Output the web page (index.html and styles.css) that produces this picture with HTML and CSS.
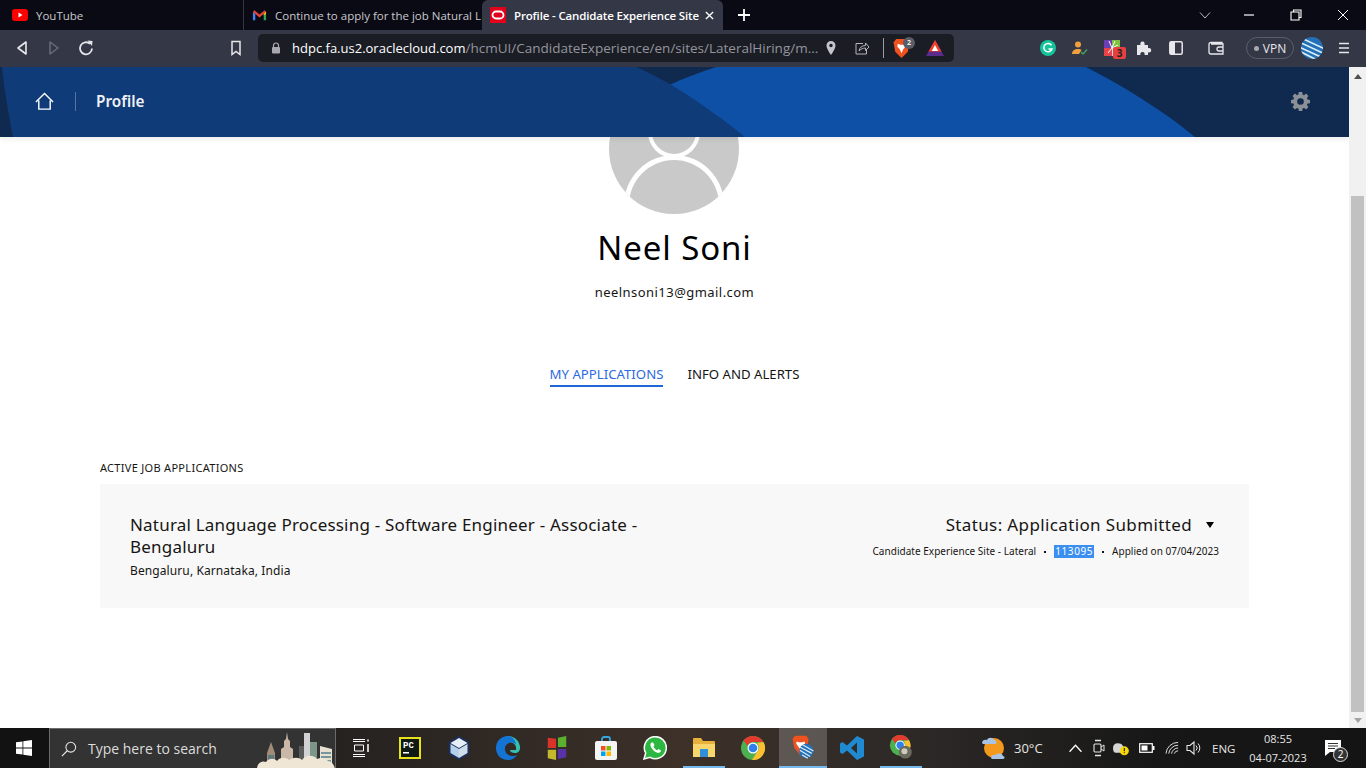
FILE: index.html
```html
<!DOCTYPE html>
<html lang="en">
  <head>
    <meta charset="UTF-8" />
    <title>Profile - Candidate Experience Site</title>
    <link rel="stylesheet" href="styles.css">
  </head>
  <body>
    <div class="tabbar">
      <div class="tab tab-yt">
        <svg class="fav" viewBox="0 0 16 16"><rect y="2" width="16" height="12" rx="3" fill="#f00"/><path d="M6.500 5.500v5l4-2.500z" fill="#fff"/></svg>
        <span class="tab-title">YouTube</span>
      </div>
      <div class="tab tab-gm">
        <svg class="fav" viewBox="0 0 16 16"><path d="M1 13V4l2.500 2v7z" fill="#4285f4"/><path d="M15 13V4l-2.500 2v7z" fill="#34a853"/><path d="M1 4l1.500-1.500L8 7l5.500-4.500L15 4 8 10z" fill="#ea4335"/><path d="M12.500 6L15 4v2l-2.500 2z" fill="#fbbc04"/></svg>
        <span class="tab-title">Continue to apply for the job Natural L</span>
      </div>
      <div class="tab tab-active">
        <svg class="fav" viewBox="0 0 16 16"><rect width="16" height="16" fill="#e2001a"/><rect x="2.500" y="4.500" width="11" height="7" rx="3.500" fill="none" stroke="#fff" stroke-width="1.800"/></svg>
        <span class="tab-title">Profile - Candidate Experience Site</span>
        <svg class="tab-x" viewBox="0 0 10 10"><path d="M1 1l8 8M9 1l-8 8" stroke="#fff" stroke-width="1.500"/></svg>
      </div>
      <svg class="tab-plus" viewBox="0 0 12 12"><path d="M6 0v12M0 6h12" stroke="#fff" stroke-width="1.800"/></svg>
      <div class="win-controls">
        <svg class="win-btn win-chev" viewBox="0 0 12 12"><path d="M1 3.500l5 5.500 5-5.500" fill="none" stroke="#b8b8be" stroke-width="1"/></svg>
        <svg class="win-btn" viewBox="0 0 12 12"><path d="M1 6h10" stroke="#fff" stroke-width="1.200"/></svg>
        <svg class="win-btn" viewBox="0 0 12 12"><path d="M3.500 2.500V1h7.500v7.500H9M1 3h8v8H1z" fill="none" stroke="#fff" stroke-width="1.100"/></svg>
        <svg class="win-btn" viewBox="0 0 12 12"><path d="M1 1l10 10M11 1L1 11" stroke="#fff" stroke-width="1"/></svg>
      </div>
    </div>

    <div class="toolbar">
      <div class="nav-btns">
        <svg class="nav-ico" viewBox="0 0 14 16"><path d="M11 2v12L3 8z" fill="none" stroke="#e8e8ec" stroke-width="1.600" stroke-linejoin="round"/></svg>
        <svg class="nav-ico" viewBox="0 0 14 16"><path d="M3 2v12l8-6z" fill="none" stroke="#6a6d78" stroke-width="1.500" stroke-linejoin="round"/></svg>
        <svg class="nav-ico nav-reload" viewBox="0 0 16 16"><path d="M14 8.500a6 6 0 1 1-2-4.700" fill="none" stroke="#e8e8ec" stroke-width="1.800"/><path d="M9.500 .5l5 .5-.5 5z" fill="#e8e8ec"/></svg>
      </div>
      <svg class="bookmark" viewBox="0 0 12 16"><path d="M2 1.500h8v13l-4-3-4 3z" fill="none" stroke="#e8e8ec" stroke-width="1.500"/></svg>
      <div class="urlbar">
        <svg class="lock" viewBox="0 0 10 12"><path d="M2.500 5V3.500a2.500 2.500 0 0 1 5 0V5" fill="none" stroke="#a8a8b0" stroke-width="1.200"/><rect x="1" y="5" width="8" height="6.500" rx="1" fill="#a8a8b0"/></svg>
        <span class="url"><b>hdpc.fa.us2.oraclecloud.com</b>/hcmUI/CandidateExperience/en/sites/LateralHiring/m...</span>
        <svg class="pin" viewBox="0 0 12 16"><path d="M6 1a4.500 4.500 0 0 0-4.500 4.500C1.500 9 6 15 6 15s4.500-6 4.500-9.500A4.500 4.500 0 0 0 6 1z" fill="#c4c4ca"/><circle cx="6" cy="5.500" r="1.700" fill="#1b1d25"/></svg>
        <svg class="share" viewBox="0 0 16 16"><path d="M9 3.500H2v10.500h10.500V10" fill="none" stroke="#b4b4bc" stroke-width="1"/><path d="M5 11c.5-3.500 3-5.500 6.500-5.500V3l3.500 4-3.500 3.500V8C9 8 7 9 5 11z" fill="none" stroke="#b4b4bc" stroke-width="1"/></svg>
        <span class="url-divider"></span>
        <div class="brave-shield">
          <svg class="brave-ico" viewBox="0 0 16 18"><path d="M3 0h10l2.500 3-1.500 9-6 6-6-6L.5 3z" fill="#f0521f"/><path d="M4.500 4.500l2.500 1h2l2.500-1 .5 2.500-2.500 3-1.500 3.500-1.500-3.500L4 7z" fill="#fff"/></svg>
          <span class="shield-count">2</span>
        </div>
        <svg class="bat-ico" viewBox="0 0 18 16"><path d="M9 0l9 16H0z" fill="#5a2a8c"/><path d="M9 0l6.500 11.500h-13z" fill="#f1412a"/><path d="M9 5l3.200 6H5.800z" fill="#fff"/></svg>
      </div>
      <div class="ext-icons">
        <svg class="ext-g" viewBox="0 0 16 16"><circle cx="8" cy="8" r="8" fill="#15c39a"/><path d="M11.500 5.200A4.200 4.200 0 1 0 12 9H8.500" fill="none" stroke="#fff" stroke-width="1.500"/></svg>
        <svg class="ext-p" viewBox="0 0 18 16"><circle cx="7" cy="4.500" r="3" fill="#f2a03d"/><path d="M1 14c0-3.500 2.500-5 6-5 2 0 3 .5 3.500 1L8 14z" fill="#f2a03d"/><path d="M10 12l2 2 4-4.500" fill="none" stroke="#3fa45b" stroke-width="1.400"/></svg>
        <div class="ext-color">
          <svg class="ext-color-ico" viewBox="0 0 16 16"><rect width="8" height="8" fill="#6a3fb5"/><rect x="8" width="8" height="8" fill="#7fbf3f"/><rect y="8" width="8" height="8" fill="#e8424a"/><rect x="8" y="8" width="8" height="8" fill="#d8d8dc"/><path d="M8 8L5 1M8 8l3-7M8 8l6-3M8 8l-4 5" stroke="#fff" stroke-width="1"/></svg>
          <span class="ext-badge">3</span>
        </div>
        <svg class="ext-puzzle" viewBox="0 0 16 16"><path d="M1 5h3.500C4 3.500 4.500 1.500 6.500 1.500S9 3.500 8.500 5H12v3.200c1.500-.5 3.200 0 3.200 2s-1.700 2.500-3.200 2V15H8.500c.5-1.500 0-3-2-3s-2.500 1.500-2 3H1z" fill="#e8e8ec"/></svg>
        <svg class="ext-side" viewBox="0 0 14 14"><rect x=".8" y=".8" width="12.400" height="12.400" rx="1.500" fill="none" stroke="#e8e8ec" stroke-width="1.500"/><rect x="1" y="1" width="5" height="12" fill="#e8e8ec"/></svg>
        <svg class="ext-wallet" viewBox="0 0 16 14"><path d="M14 3V1.500H3A1.800 1.800 0 0 0 1 3.500V11a2 2 0 0 0 2 2h12V3H3" fill="none" stroke="#e8e8ec" stroke-width="1.300"/><path d="M15 6h-4a2 2 0 0 0 0 4h4" fill="none" stroke="#e8e8ec" stroke-width="1.300"/></svg>
        <div class="vpn"><i></i>VPN</div>
        <svg class="ext-globe" viewBox="0 0 22 22"><defs><clipPath id="globe"><circle cx="11" cy="11" r="11"/></clipPath></defs><g clip-path="url(#globe)"><rect width="22" height="22" fill="#2470b8"/><path d="M-2 0L24 12M-4 4L24 17M-4 9L22 21M-2 14L16 23" stroke="#d8eef6" stroke-width="1.700"/></g></svg>
        <svg class="ext-menu" viewBox="0 0 12 12"><path d="M1 1.500h10M1 6h10M1 10.500h10" stroke="#e8e8ec" stroke-width="1.700"/></svg>
      </div>
    </div>

    <div class="viewport">
      <div class="page">
        <header class="hero">
          <svg class="hero-bg" viewBox="0 0 1349 70" preserveAspectRatio="none">
            <rect width="1349" height="70" fill="#10294f"/>
            <path d="M620 45C650 25 685 10 716 0H1086C1125 20 1165 45 1195 70H620z" fill="#0d50a5"/>
            <path d="M2 0H636C670 14 710 42 745 70H13C8 45 4 20 2 0z" fill="#0f3b78"/>
          </svg>
          <div class="hero-left">
            <svg class="home" viewBox="0 0 20 20"><path d="M1 10.500L10 1.500l9 9M4 9v9h12V9" fill="none" stroke="#fff" stroke-width="1.500"/></svg>
            <span class="hero-sep"></span>
            <span class="hero-title">Profile</span>
          </div>
          <svg class="gear" viewBox="0 0 20 20"><path fill-rule="evenodd" d="M8.200 0h3.600l.4 2.700 1.500.6 2.200-1.600 2.500 2.500-1.600 2.200.6 1.500 2.600.4v3.500l-2.600.4-.6 1.500 1.600 2.200-2.500 2.500-2.200-1.600-1.500.6-.4 2.600H8.200l-.4-2.600-1.500-.6-2.200 1.600-2.500-2.500 1.600-2.200-.6-1.500L0 11.800V8.300l2.600-.4.600-1.500-1.600-2.200 2.500-2.500 2.200 1.600 1.500-.6zM10 6.500a3.500 3.500 0 1 0 0 7 3.500 3.500 0 0 0 0-7z" fill="#8b8f96"/></svg>
        </header>

        <section class="profile">
          <svg class="avatar" viewBox="0 53 130 77">
            <defs><clipPath id="avatar-clip"><circle cx="65" cy="65" r="65"/></clipPath></defs>
            <g clip-path="url(#avatar-clip)">
              <rect width="130" height="130" fill="#c9c9c9"/>
              <circle cx="65" cy="48" r="26" fill="#fff"/>
              <circle cx="65" cy="48" r="22" fill="#c9c9c9"/>
              <circle cx="65" cy="121" r="50" fill="#fff"/>
              <circle cx="65" cy="121" r="45" fill="#c9c9c9"/>
            </g>
          </svg>
          <h1 class="name">Neel Soni</h1>
          <div class="email">neelnsoni13@gmail.com</div>
          <nav class="tabs">
            <a class="tabs-item tabs-active">MY APPLICATIONS</a>
            <a class="tabs-item">INFO AND ALERTS</a>
          </nav>
        </section>

        <section class="apps">
          <h2 class="apps-heading">ACTIVE JOB APPLICATIONS</h2>
          <div class="card">
            <div class="card-left">
              <div class="job-title">Natural Language Processing - Software Engineer - Associate - Bengaluru</div>
              <div class="job-loc">Bengaluru, Karnataka, India</div>
            </div>
            <div class="card-right">
              <div class="status">Status: Application Submitted<i class="caret"></i></div>
              <div class="meta">
                <span>Candidate Experience Site - Lateral</span>
                <span class="dot"></span>
                <span class="req">113095</span>
                <span class="dot"></span>
                <span>Applied on 07/04/2023</span>
              </div>
            </div>
          </div>
        </section>
      </div>
      <div class="scrollbar">
        <i class="arrow arrow-up"></i>
        <div class="scroll-track"><div class="scroll-thumb"></div></div>
        <i class="arrow arrow-down"></i>
      </div>
    </div>

    <div class="taskbar">
      <div class="start">
        <svg class="start-ico" viewBox="0 0 16 16"><path d="M0 2.300l6.500-.9v6.200H0zM7.300 1.300L16 0v7.600H7.300zM0 8.400h6.500v6.200L0 13.700zM7.300 8.400H16V16l-8.700-1.300z" fill="#fff"/></svg>
      </div>
      <div class="search">
        <svg class="search-ico" viewBox="0 0 18 18"><circle cx="11" cy="7" r="5.500" fill="none" stroke="#e6e6e6" stroke-width="1.200"/><path d="M7 11l-6 6" stroke="#e6e6e6" stroke-width="1.300"/></svg>
        <span class="search-text">Type here to search</span>
        <svg class="city" viewBox="0 0 79 40">
          <path d="M11 40V24l4-11 4 11v16z" fill="#a08c78"/>
          <path d="M12 26h6v14h-6z" fill="#5c7a7c"/>
          <path d="M25 40V20l3-2v-6l2-2 1-7 1 7 2 2v6l3 2v20z" fill="#c9b8a8"/>
          <path d="M43 17h8v23h-8z" fill="#5a5a58"/>
          <path d="M48 4h6v36h-6z" fill="#d2d2d4"/>
          <path d="M54 13h7v27h-7z" fill="#7c9688"/>
          <path d="M64 17l12 3v20H64z" fill="#e8e0d0"/>
          <path d="M65 24h10M65 28h10M65 32h10" stroke="#4f7d8c" stroke-width="1.500"/>
          <path d="M1 40c0-5 4-9 9-7 3-4 8-4 11-1 3-4 9-4 12-1 4-3 10-3 13 0 3-5 11-6 15-1 4-2 9-1 11 2 3 0 6 3 7 8z" fill="#efe6d6"/>
        </svg>
      </div>
      <div class="task-apps">
        <div class="task-app">
          <svg class="ico-taskview" viewBox="0 0 16 18"><path d="M0 .5h12M0 2.500h12M1.500 6h9v6h-9zM0 15.500h12M0 17.500h12" fill="none" stroke="#fff" stroke-width="1"/><path d="M15 .5v2M15 5v8" stroke="#fff" stroke-width="1.500"/></svg>
        </div>
        <div class="task-app">
          <svg class="ico-pc" viewBox="0 0 22 22"><rect width="22" height="22" fill="#e8e21d"/><rect x="2" y="2" width="18" height="18" fill="#0f1a14"/><text x="4" y="11" class="pc-text">PC</text><rect x="4" y="15" width="6" height="1.500" fill="#fff"/></svg>
        </div>
        <div class="task-app">
          <svg viewBox="0 0 22 24"><path d="M11 0l10.500 6v12L11 24 .5 18V6z" fill="#1c2f5a"/><path d="M11 2l8.500 5L11 12 2.500 7z" fill="#e6eff8"/><path d="M2.500 8L11 13v9l-8.500-5z" fill="#b4d0ec"/><path d="M19.500 8L11 13v9l8.500-5z" fill="#d0deec"/></svg>
        </div>
        <div class="task-app">
          <svg viewBox="0 0 24 24"><path d="M12 0a12 12 0 0 1 12 12c0 3-2 5-5 5-3 0-5-1-5-3h6c1-4-2-8-7-8-4 0-7 2-8 5C6 3 9 0 12 0z" fill="#35c1b0"/><path d="M12 0C5 0 0 5 0 12c0 7 5 12 12 12 4 0 7-2 9-5-4 2-11 1-12-5-.5-3 1-6 4-7 3-1 6 0 7 2 0-5-4-9-8-9z" fill="#1474d4"/></svg>
        </div>
        <div class="task-app">
          <svg viewBox="0 0 22 26"><path d="M1 2l9 1v10H1z" fill="#d8342a"/><path d="M12 2l9-2v12h-9z" fill="#5cb030"/><path d="M1 15h9v11l-9-2z" fill="#c4b92c"/><path d="M12 14h9v9l-9 2z" fill="#5a32a8"/></svg>
        </div>
        <div class="task-app">
          <svg viewBox="0 0 22 24"><path d="M7 6V3a2 2 0 0 1 2-2h4a2 2 0 0 1 2 2v3" fill="none" stroke="#35a8e0" stroke-width="1.800"/><rect y="5" width="22" height="19" rx="2" fill="#f4f4f4"/><rect x="6" y="10" width="4.500" height="4.500" fill="#f25022"/><rect x="11.500" y="10" width="4.500" height="4.500" fill="#7fba00"/><rect x="6" y="15.500" width="4.500" height="4.500" fill="#00a4ef"/><rect x="11.500" y="15.500" width="4.500" height="4.500" fill="#ffb900"/></svg>
        </div>
        <div class="task-app">
          <svg viewBox="0 0 24 24"><path d="M1 23l1.700-6A11 11 0 1 1 7 21.300z" fill="#2bb741" stroke="#fff" stroke-width="1.500"/><path d="M8.500 6.500c-1.500 1-1.500 3 0 5.500s4 4.500 6.500 5c1.500 0 3-1 3-2.500l-2.500-1.500-1.300 1.200c-1.500-.5-3-2-3.700-3.700l1-1.300-1.300-2.700z" fill="#fff"/></svg>
        </div>
        <div class="task-app task-open">
          <svg viewBox="0 0 24 22"><path d="M1 3a1 1 0 0 1 1-1h7l2 3h11a1 1 0 0 1 1 1v14a1 1 0 0 1-1 1H2a1 1 0 0 1-1-1z" fill="#e8b23a"/><rect x="1" y="8" width="22" height="13" fill="#f9d66c"/><rect x="8" y="13" width="8" height="8" fill="#2f8fd8"/></svg>
        </div>
        <div class="task-app">
          <svg viewBox="0 0 24 24"><circle cx="12" cy="12" r="12" fill="#4caf50"/><path d="M12 0a12 12 0 0 1 10.400 6H12a6 6 0 0 0-5.600 3.800L2.500 4.500A12 12 0 0 1 12 0z" fill="#e33b2e"/><path d="M22.400 6A12 12 0 0 1 11 24l5.300-8.500A6 6 0 0 0 16 7z" fill="#fbc02d"/><circle cx="12" cy="12" r="5.500" fill="#fff"/><circle cx="12" cy="12" r="4.300" fill="#2f80ed"/></svg>
        </div>
        <div class="task-app task-active">
          <svg viewBox="0 0 26 30"><path d="M3 1h14l3 4-1.500 11L10 26l-8-10L0 5z" fill="#f0521f"/><path d="M5 8l3 1h4l3-1 .5 3-3 4-2.500 4-2.500-4-3-4z" fill="#fff"/><circle cx="17" cy="20" r="9" fill="#2470b8"/><path d="M9 15L24 23M9 19L22 27M12 25L19 29M12 12L26 20" stroke="#d8eef6" stroke-width="1.500"/></svg>
        </div>
        <div class="task-app">
          <svg viewBox="0 0 24 24"><path d="M17 0l7 3.500v17L17 24 7 14.500 2.500 18 0 16.500V7.500L2.500 6 7 9.500zM17 6.500L11 12l6 5.500z" fill="#1f8ad2" fill-rule="evenodd"/></svg>
        </div>
        <div class="task-app task-open">
          <svg viewBox="0 0 26 28"><circle cx="12" cy="12" r="12" fill="#4caf50"/><path d="M12 0a12 12 0 0 1 10.400 6H12a6 6 0 0 0-5.600 3.800L2.500 4.500A12 12 0 0 1 12 0z" fill="#e33b2e"/><path d="M22.400 6A12 12 0 0 1 11 24l5.300-8.500A6 6 0 0 0 16 7z" fill="#fbc02d"/><circle cx="12" cy="12" r="5.500" fill="#fff"/><circle cx="12" cy="12" r="4.300" fill="#2f80ed"/><circle cx="18" cy="20" r="7.500" fill="#6b6a5e"/><circle cx="17" cy="19" r="3.500" fill="#cfcabb"/></svg>
        </div>
      </div>
      <div class="tray">
        <svg class="weather" viewBox="0 0 24 26"><circle cx="13" cy="13" r="10" fill="#f39a1e"/><path d="M1 8c0-3 3-4 5-3 1-3 6-3 7 0 2 0 3 2 2 4H2z" fill="#a8c4e4"/><path d="M10 23c0-3 3-4 5-3 1-2 6-2 7 1 2 0 2 3 0 3H11z" fill="#a8c4e4"/></svg>
        <span class="temp">30°C</span>
        <svg class="tray-chev" viewBox="0 0 12 8"><path d="M.5 7L6 1l5.500 6" fill="none" stroke="#fff" stroke-width="1.200"/></svg>
        <svg class="tray-meet" viewBox="0 0 12 20"><path d="M2 2.500h6M2 17.500h6" stroke="#e6e6e6" stroke-width="1.500" fill="none"/><rect x="1" y="6" width="7" height="8" rx="1" fill="none" stroke="#e6e6e6" stroke-width="1.100"/><path d="M8 9l3-2v6l-3-2" fill="none" stroke="#e6e6e6"/></svg>
        <svg class="tray-cloud" viewBox="0 0 18 16"><path d="M0 8c0-3 2-5 5-5s5 1 6 4l-2 6H3c-2 0-3-2-3-5z" fill="#d6d6d6"/><circle cx="12" cy="11" r="4.800" fill="#f7d70a"/><path d="M12 8v3.500M12 12.500v1" stroke="#222" stroke-width="1.200"/></svg>
        <svg class="tray-batt" viewBox="0 0 16 12"><rect x=".7" y="1.700" width="12.600" height="8.600" fill="none" stroke="#fff" stroke-width="1.200"/><rect x="2.500" y="3.500" width="6" height="5" fill="#fff"/><rect x="14" y="4" width="1.500" height="4" fill="#fff"/></svg>
        <svg class="tray-wifi" viewBox="0 0 16 14"><path d="M1 13A13 13 0 0 1 14 1M4 13A10 10 0 0 1 14 4M7 13a7 7 0 0 1 7-6M10 13a4 4 0 0 1 4-3" fill="none" stroke="#e6e6e6" stroke-width="1"/></svg>
        <svg class="tray-vol" viewBox="0 0 16 16"><path d="M1 5.500h3L8 2v12l-4-3.500H1z" fill="none" stroke="#e6e6e6" stroke-width="1.100"/><path d="M10 5.500a3.500 3.500 0 0 1 0 5M12 3.500a6.500 6.500 0 0 1 0 9" fill="none" stroke="#e6e6e6"/></svg>
        <span class="lang">ENG</span>
        <div class="clock"><span>08:55</span><span>04-07-2023</span></div>
        <div class="notif">
          <svg class="notif-ico" viewBox="0 0 16 16"><path d="M0 0h16v12H5l-5 4z" fill="#fff"/><path d="M3 3.500h10M3 6h10M3 8.500h7" stroke="#333" stroke-width="1"/></svg>
          <span class="notif-count">2</span>
        </div>
      </div>
    </div>
  </body>
</html>
```

FILE: styles.css
```css
html,
body {
  margin: 0;
  height: 768px;
  overflow: hidden;
}
body {
  display: flex;
  flex-direction: column;
  width: 1366px;
  font-family: "Noto Sans", sans-serif;
  background: #fff;
}
svg {
  display: block;
  flex: none;
}

/* browser tabs */
.tabbar {
  display: flex;
  align-items: center;
  height: 30px;
  background: #0a0a14;
  font-family: "Open Sans", sans-serif;
  font-size: 11.500px;
  color: #c8c8cc;
}
.tab {
  display: flex;
  align-items: center;
  height: 30px;
  box-sizing: border-box;
  overflow: hidden;
  white-space: nowrap;
}
.tab-yt {
  width: 244px;
  padding-left: 12px;
  border-right: 1px solid #34353f;
}
.tab-gm {
  width: 238px;
  padding-left: 8px;
}
.fav {
  width: 16px;
  height: 16px;
  margin-right: 8px;
}
.tab-gm .fav {
  width: 15px;
  height: 15px;
}
.tab-title {
  overflow: hidden;
  flex: 1;
}
.tab-active {
  width: 241px;
  padding: 0 8px;
  background: #343745;
  border-radius: 6px 6px 0 0;
  color: #fff;
  font-weight: 600;
  letter-spacing: -0.15px;
}
.tab-x {
  width: 9px;
  height: 9px;
  margin-left: 6px;
  margin-right: 1px;
}
.tab-plus {
  width: 12px;
  height: 12px;
  margin-left: 15px;
}
.win-controls {
  display: flex;
  margin-left: auto;
  margin-right: 17px;
  gap: 35px;
}
.win-btn {
  width: 12px;
  height: 12px;
}
.win-chev {
  margin-right: -3px;
}

/* toolbar */
.toolbar {
  display: flex;
  align-items: center;
  height: 37px;
  box-sizing: border-box;
  padding: 4px 0 5px;
  background: #343745;
}
.nav-btns {
  display: flex;
  align-items: center;
  gap: 18px;
  width: 230px;
  padding-left: 15px;
  box-sizing: border-box;
}
.nav-ico {
  width: 14px;
  height: 16px;
}
.nav-reload {
  width: 16px;
  height: 16px;
  margin-left: -1px;
}
.bookmark {
  width: 12px;
  height: 16px;
  margin-right: 16px;
}
.urlbar {
  display: flex;
  align-items: center;
  width: 696px;
  height: 28px;
  box-sizing: border-box;
  padding-left: 13px;
  background: #1b1d25;
  border-radius: 5px;
}
.lock {
  width: 10px;
  height: 12px;
  margin-right: 11px;
}
.url {
  width: 533px;
  font-family: "Open Sans", sans-serif;
  font-size: 13.500px;
  color: #93959e;
  white-space: nowrap;
}
.url b {
  font-size: 13px;
  font-weight: 500;
  color: #fff;
}
.pin {
  width: 12px;
  height: 16px;
  margin-right: 17px;
}
.share {
  width: 16px;
  height: 16px;
}
.url-divider {
  width: 1px;
  height: 20px;
  margin: 0 9px 0 13px;
  background: #9a9ca4;
}
.brave-shield {
  position: relative;
  width: 16px;
  margin-right: 17px;
}
.brave-ico {
  width: 17px;
  height: 19px;
}
.shield-count {
  position: absolute;
  top: -2px;
  left: 10px;
  width: 12px;
  height: 12px;
  border-radius: 50%;
  background: #5a5c66;
  color: #eee;
  font-size: 7px;
  font-weight: 700;
  line-height: 12px;
  text-align: center;
}
.bat-ico {
  width: 18px;
  height: 16px;
}
.ext-icons {
  display: flex;
  align-items: center;
  margin-left: 86px;
}
.ext-g {
  width: 16px;
  height: 16px;
  margin-right: 15px;
}
.ext-p {
  width: 18px;
  height: 16px;
  margin-right: 15px;
}
.ext-color {
  position: relative;
  width: 16px;
  margin-right: 16px;
}
.ext-color-ico {
  width: 16px;
  height: 16px;
}
.ext-badge {
  position: absolute;
  top: 7px;
  left: 9px;
  width: 13px;
  height: 12px;
  border-radius: 2px;
  background: #e8403f;
  color: #222;
  font-size: 10px;
  font-weight: 700;
  line-height: 12px;
  text-align: center;
}
.ext-puzzle {
  width: 16px;
  height: 16px;
  margin-right: 17px;
}
.ext-side {
  width: 14px;
  height: 14px;
  margin-right: 25px;
}
.ext-wallet {
  width: 16px;
  height: 14px;
  margin-right: 22px;
}
.vpn {
  display: flex;
  align-items: center;
  justify-content: center;
  gap: 4px;
  width: 48px;
  height: 22px;
  box-sizing: border-box;
  border: 1px solid #5a5d6b;
  border-radius: 11px;
  font-family: "Open Sans", sans-serif;
  font-size: 12px;
  color: #e8e8ec;
}
.vpn i {
  width: 5px;
  height: 5px;
  border-radius: 50%;
  background: #a8a8b0;
}
.ext-globe {
  width: 22px;
  height: 22px;
  margin-left: 7px;
  margin-right: 15px;
}
.ext-menu {
  width: 12px;
  height: 12px;
}

/* page */
.viewport {
  display: flex;
  height: 661px;
}
.page {
  width: 1349px;
  overflow: hidden;
}
.hero {
  position: relative;
  z-index: 1;
  display: flex;
  align-items: center;
  justify-content: space-between;
  height: 70px;
  box-sizing: border-box;
  padding: 0 39px 2px 35px;
  box-shadow: 0 2px 6px rgba(0, 0, 0, 0.08);
}
.hero-bg {
  position: absolute;
  left: 0;
  top: 0;
  width: 1349px;
  height: 70px;
}
.hero-left {
  position: relative;
  display: flex;
  align-items: center;
}
.home {
  width: 19px;
  height: 19px;
}
.hero-sep {
  width: 1px;
  height: 19px;
  margin: 0 20px 0 21px;
  background: #56739f;
}
.hero-title {
  color: #f0f2f6;
  font-size: 15.300px;
  font-weight: 600;
}
.gear {
  position: relative;
  width: 19px;
  height: 19px;
}
.profile {
  display: flex;
  flex-direction: column;
  align-items: center;
}
.avatar {
  width: 130px;
  height: 77px;
  margin-right: 1px;
}
.name {
  margin: 9px 0 0;
  font-size: 33px;
  font-weight: 400;
  line-height: 50px;
  letter-spacing: 0.9px;
  color: #000;
}
.email {
  margin-top: 9px;
  font-size: 13px;
  line-height: 20px;
  letter-spacing: 0.45px;
  color: #161513;
}
.tabs {
  display: flex;
  gap: 24px;
  margin-top: 62px;
}
.tabs-item {
  padding-bottom: 1px;
  font-size: 13.200px;
  line-height: 20px;
  color: #161513;
}
.tabs-active {
  color: #2d6be0;
  border-bottom: 2px solid #1f66d8;
}
.apps {
  margin: 73px 100px 0;
}
.apps-heading {
  margin: 0 0 8px;
  font-size: 11px;
  font-weight: 400;
  line-height: 16px;
  letter-spacing: 0.3px;
  color: #161513;
}
.card {
  display: flex;
  justify-content: space-between;
  height: 124px;
  box-sizing: border-box;
  padding: 30px;
  background: #f8f8f8;
}
.card-left {
  width: 530px;
}
.job-title {
  font-size: 17px;
  line-height: 22px;
  letter-spacing: 0.2px;
  color: #161513;
}
.job-loc {
  margin-top: 4px;
  font-size: 12px;
  line-height: 18px;
  letter-spacing: 0.1px;
  color: #161513;
}
.card-right {
  display: flex;
  flex-direction: column;
  align-items: flex-end;
}
.status {
  display: flex;
  align-items: center;
  font-size: 17px;
  line-height: 22px;
  letter-spacing: 0.37px;
  color: #161513;
}
.caret {
  width: 0;
  height: 0;
  margin-left: 14px;
  margin-right: 5px;
  border-left: 4.500px solid transparent;
  border-right: 4.500px solid transparent;
  border-top: 6px solid #000;
}
.meta {
  display: flex;
  align-items: center;
  margin-top: 9px;
  font-size: 10px;
  line-height: 13px;
  letter-spacing: 0.03px;
  color: #161513;
}
.dot {
  width: 2px;
  height: 2px;
  margin: 0 8px;
  background: #161513;
}
.req {
  padding: 0 1px;
  background: #3a8ff0;
  color: #fff;
  letter-spacing: 0.6px;
}

/* scrollbar */
.scrollbar {
  display: flex;
  flex-direction: column;
  align-items: center;
  width: 17px;
  background: #f1f1f1;
}
.arrow {
  width: 0;
  height: 0;
  margin: 5px 0;
  border-left: 4px solid transparent;
  border-right: 4px solid transparent;
}
.arrow-up {
  margin: 7px 0 3px;
  border-bottom: 5px solid #505050;
}
.arrow-down {
  border-top: 5px solid #a3a3a3;
}
.scroll-track {
  flex: 1;
  width: 100%;
  padding: 114px 2px 0;
  box-sizing: border-box;
}
.scroll-thumb {
  height: 516px;
  background: #c1c1c1;
}

/* windows taskbar */
.taskbar {
  display: flex;
  align-items: center;
  height: 40px;
  background: linear-gradient(90deg, #141414 0, #2a2522 30%, #3d3129 50%, #2b2826 68%, #171717 85%, #141414 100%);
  color: #e6e6e6;
}
.start {
  display: flex;
  align-items: center;
  justify-content: center;
  width: 49px;
  height: 40px;
  padding-right: 1px;
  box-sizing: border-box;
  background: #121212;
}
.start-ico {
  width: 16px;
  height: 16px;
}
.search {
  display: flex;
  align-items: center;
  width: 287px;
  height: 40px;
  box-sizing: border-box;
  padding-left: 11px;
  background: #333;
  border: 1px solid #6b6b6b;
  border-width: 1px 1px 0;
  overflow: hidden;
}
.search-ico {
  width: 16px;
  height: 16px;
  margin-right: 11px;
}
.search-text {
  width: 168px;
  font-family: "Open Sans", sans-serif;
  font-size: 14px;
  color: #dcdcdc;
  white-space: nowrap;
}
.city {
  width: 79px;
  height: 40px;
}
.task-apps {
  display: flex;
  width: 610px;
  height: 40px;
}
.task-app {
  display: flex;
  align-items: center;
  justify-content: center;
  width: 49px;
  height: 40px;
  box-sizing: border-box;
}
.task-app svg {
  width: 24px;
  height: 24px;
}
.task-app .ico-taskview {
  width: 16px;
  height: 18px;
}
.task-app .ico-pc {
  width: 22px;
  height: 22px;
}
.task-open,
.task-active {
  border-bottom: 2px solid #76b9ed;
}
.task-open {
  border-image: linear-gradient(90deg, transparent 5px, #76b9ed 5px, #76b9ed 45px, transparent 45px) 1;
}
.task-active {
  width: 48px;
  margin-left: 2px;
  background: rgba(255, 255, 255, 0.2);
}
.tray {
  display: flex;
  align-items: center;
  flex: 1;
  margin-left: 35px;
}
.weather {
  width: 24px;
  height: 26px;
  margin-right: 9px;
}
.temp {
  width: 55px;
  font-family: "Open Sans", sans-serif;
  font-size: 13px;
}
.tray-chev {
  width: 13px;
  height: 9px;
  margin-right: 11px;
}
.tray-meet {
  width: 12px;
  height: 20px;
  margin-right: 8px;
}
.tray-cloud {
  width: 17px;
  height: 16px;
  margin-right: 9px;
}
.tray-batt {
  width: 16px;
  height: 12px;
  margin-right: 10px;
}
.tray-wifi {
  width: 15px;
  height: 14px;
  margin-right: 6px;
}
.tray-vol {
  width: 16px;
  height: 16px;
  margin-right: 10px;
}
.lang {
  width: 35px;
  font-family: "Open Sans", sans-serif;
  font-size: 11.500px;
}
.clock {
  display: flex;
  flex-direction: column;
  align-items: center;
  width: 62px;
  font-family: "Open Sans", sans-serif;
  font-size: 11px;
  line-height: 19px;
}
.notif {
  position: relative;
  margin-left: 16px;
}
.notif-ico {
  width: 16px;
  height: 16px;
}
.notif-count {
  position: absolute;
  top: 7px;
  left: 8px;
  width: 15px;
  height: 15px;
  box-sizing: border-box;
  border: 1px solid #ddd;
  border-radius: 50%;
  background: #333;
  color: #fff;
  font-size: 10px;
  line-height: 13px;
  text-align: center;
}
.pc-text {
  font-family: "Liberation Mono", monospace;
  font-size: 9px;
  font-weight: 700;
  fill: #fff;
}
```
